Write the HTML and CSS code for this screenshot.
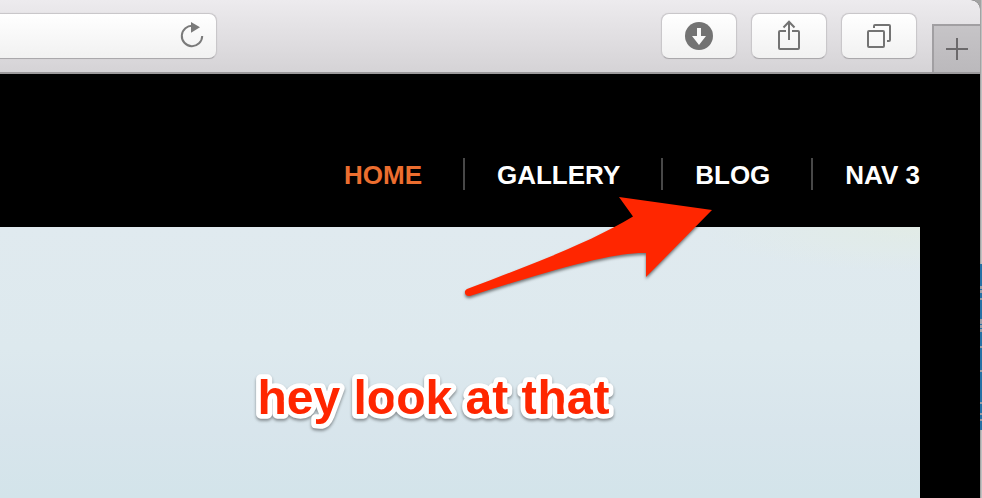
FILE: index.html
```
<!DOCTYPE html>
<html lang="en">
<head>
<meta charset="utf-8">
<title>Gallery</title>
<link rel="stylesheet" href="styles.css">
</head>
<body>
<div class="desktop">
  <div class="window">
    <header class="toolbar">
      <div class="address">
        <svg width="26" height="30" viewBox="0 0 26 30"><path d="M14 5.8A10.2 10.2 0 1 0 23.2 16" fill="none" stroke="#7a7a7a" stroke-width="2"/><path d="M12 2l9 5.3-9 5.5z" fill="#7a7a7a"/></svg>
      </div>
      <div class="actions">
        <div class="button"><svg width="30" height="32" viewBox="0 0 30 32"><circle cx="15" cy="16" r="14" fill="#737373"/><path d="M13 8h4v8h5l-7 9-7-9h5z" fill="#fafafa"/></svg></div>
        <div class="button"><svg width="30" height="32" viewBox="0 0 30 32"><path d="M12 11H6q-1 0-1 1v16q0 1 1 1h18q1 0 1-1V12q0-1-1-1h-6M15 20V2M9.500 7.500L15 1.800l5.500 5.700" fill="none" stroke="#737373" stroke-width="2"/></svg></div>
        <div class="button"><svg width="30" height="32" viewBox="0 0 30 32"><rect x="4" y="11" width="16" height="16" rx="1" fill="none" stroke="#737373" stroke-width="2"/><path d="M10 8V6q0-1 1-1h14q1 0 1 1v14q0 1-1 1h-2" fill="none" stroke="#737373" stroke-width="2"/></svg></div>
      </div>
      <div class="new-tab"><svg width="22" height="22" viewBox="0 0 22 22"><path d="M11 0v22M0 11h22" stroke="#6b696b" stroke-width="2"/></svg></div>
    </header>
    <main class="page">
      <nav class="nav">
        <span class="item current">HOME</span>
        <span class="item">GALLERY</span>
        <span class="item">BLOG</span>
        <span class="item">NAV 3</span>
      </nav>
      <section class="hero"></section>
    </main>
  </div>
  <div class="backdrop">
    <svg width="2" height="166" viewBox="0 0 2 166"><path d="M0 0h2v166H0z" fill="#2671a5"/><path d="M1 22v3M1 26v3M1 34v2M1 55v5M1 61v3M1 65v3M1 82v2M1 106v2M1 138v2M1 149v2M1 155v2" stroke="#9a9da5" stroke-width="2"/></svg>
  </div>
</div>
<svg class="annotation" width="982" height="498" viewBox="0 0 982 498">
  <path class="arrow" d="M467 289C515 271 590 243 633 216.500L619 197 712 210 646 277V253C612 252 545 272 470 296C465 297 463 291 467 289Z"/>
  <text class="note" x="257.500" y="414" textLength="352">hey look at that</text>
</svg>
</body>
</html>
```
FILE: styles.css
```
* { box-sizing: border-box; }
body {
  margin: 0;
  overflow: hidden;
  font-family: "Liberation Sans", Arial, sans-serif;
}
svg { display: block; }
.desktop {
  display: flex;
  width: 982px;
  height: 498px;
  background: linear-gradient(90deg, #a3a3a3 981px, #c0c0c0 981px);
}
.window {
  width: 980px;
  height: 498px;
  border-top-right-radius: 9px;
  overflow: hidden;
  background: #000;
}
.toolbar {
  display: flex;
  height: 74px;
  border-bottom: 2px solid #9c9a9c;
  background: linear-gradient(#edebee, #d5d3d6);
}
.address, .button {
  height: 46px;
  margin-top: 13px;
  border: 1px solid #c9c7ca;
  border-bottom-color: #aaa8ab;
  border-radius: 8px;
  background: linear-gradient(#fff, #f1f1f1);
  box-shadow: 0 0 1px rgba(0, 0, 0, .15);
  display: flex;
  align-items: center;
  justify-content: center;
}
.address {
  width: 217px;
  border-left: 0;
  border-radius: 0 8px 8px 0;
  justify-content: flex-end;
  padding-right: 11px;
}
.address svg { margin-bottom: 2px; }
.actions {
  display: flex;
  gap: 14px;
  margin-left: 444px;
}
.button { width: 76px; }
.new-tab {
  width: 48px;
  height: 48px;
  margin: 24px 0 0 15px;
  border: solid #a19fa2;
  border-width: 2px 0 0 2px;
  background: linear-gradient(#c6c4c7, #bbb9bc);
  display: flex;
  align-items: center;
  justify-content: center;
}
.page { padding: 84px 60px 0 0; }
.nav {
  display: flex;
  justify-content: flex-end;
  height: 32px;
  font-size: 26px;
  font-weight: 700;
  line-height: 34px;
  color: #fff;
}
.item { padding-left: 32px; }
.item:not(:last-child) {
  padding-right: 41px;
  border-right: 2px solid #484848;
}
.current { color: #ec6e2f; }
.hero {
  height: 271px;
  margin-top: 37px;
  background:
    radial-gradient(ellipse 220px 45px at 100% 0, rgba(226, 236, 228, .8), transparent),
    linear-gradient(#e0eaef, #dde9ee 45%, #d8e5ec 75%, #d3e4ea);
}
.backdrop {
  width: 2px;
  padding-top: 264px;
}
.annotation {
  position: absolute;
  left: 0;
  top: 0;
}
.arrow {
  fill: #ff2600;
  filter: drop-shadow(0 2px 1.5px rgba(0, 0, 0, .5));
}
.note {
  font-size: 48px;
  font-weight: 700;
  fill: #ff2600;
  stroke: #fff;
  stroke-width: 9.5px;
  stroke-linejoin: round;
  paint-order: stroke;
  filter: drop-shadow(0 2px 1.5px rgba(0, 0, 0, .4));
}
```
